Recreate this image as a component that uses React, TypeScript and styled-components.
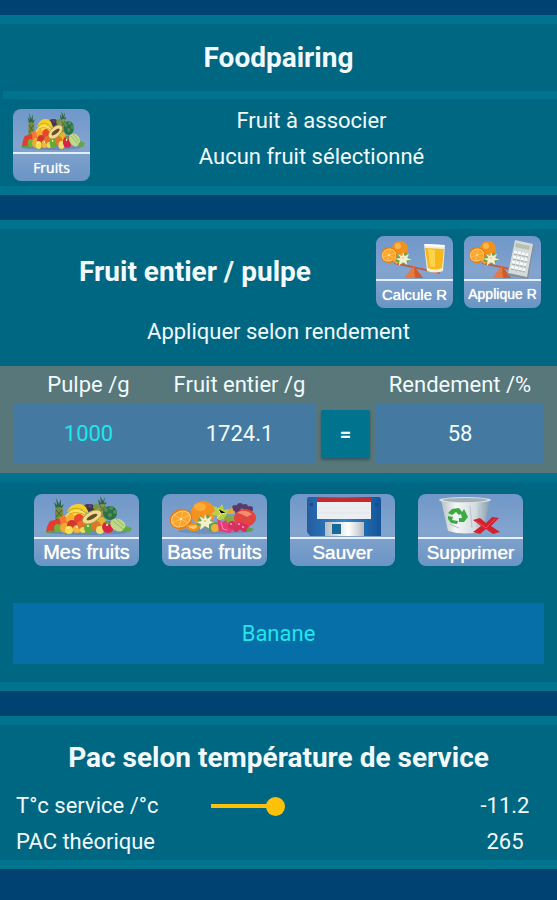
import React, { useState } from 'react';
import styled, { createGlobalStyle } from 'styled-components';

const color = {
  page: '#004271',
  card: '#006783',
  edge: '#00738f',
  band: '#57777a',
  field: '#447aa2',
  name: '#066fa8',
  text: '#f2fbff',
  cyan: '#1ee6ea',
  amber: '#ffc107',
};

const GlobalStyle = createGlobalStyle`
  * { box-sizing: border-box; }
  body {
    margin: 0;
    background: ${color.page};
    color: ${color.text};
    font-family: Roboto, 'Liberation Sans', sans-serif;
    font-size: 22px;
    line-height: 36px;
  }
  button, input { font: inherit; color: inherit; border: 0; margin: 0; padding: 0; }
`;

const Page = styled.main`
  display: flex;
  flex-direction: column;
  gap: 25px;
  padding: 15px 0 31px;
`;

const Card = styled.section`
  background: ${color.card};
  border: solid ${color.edge};
  border-width: 9px 0;
`;

const Title = styled.h2<{ $tall?: boolean }>`
  margin: 0;
  text-align: center;
  font-size: 28px;
  font-weight: 700;
  line-height: ${(p) => (p.$tall ? 67 : 36)}px;
`;

const Pairing = styled.div`
  display: grid;
  grid-template-columns: 77px 1fr;
  align-items: end;
  margin-left: 3px;
  padding: 4px 24px 5px 10px;
  border-top: 8px solid ${color.edge};
`;

const Selection = styled.div`
  padding-bottom: 6px;
`;

const Line = styled.p`
  margin: 0;
  text-align: center;
`;

const YieldHeader = styled.header`
  display: grid;
  grid-template-columns: 1fr auto auto;
  align-items: center;
  column-gap: 11px;
  padding: 7px 16px 6px 25px;
`;

const YieldBand = styled.div`
  display: grid;
  grid-template-columns: 151fr 151fr 61px 168fr;
  grid-template-rows: 37px 61px;
  margin-top: 16px;
  padding: 0 13px 9px;
  background: ${color.band};
`;

const ColumnLabel = styled.label<{ $column: number }>`
  grid-column: ${(p) => p.$column};
  grid-row: 1;
  line-height: 38px;
  text-align: center;
  white-space: nowrap;
`;

const Field = styled.input<{ $editable?: boolean; $name?: boolean; $column?: number }>`
  grid-row: 2;
  grid-column: ${(p) => p.$column ?? 'auto'};
  width: 100%;
  min-width: 0;
  height: 61px;
  border-radius: 0;
  text-align: center;
  background: ${(p) => (p.$name ? color.name : color.field)};
  color: ${(p) => (p.$editable ? color.cyan : color.text)};
`;

const EqualsButton = styled.button`
  grid-row: 2;
  grid-column: 3;
  width: 49px;
  height: 48px;
  place-self: center;
  border-radius: 2px;
  background: ${color.edge};
  box-shadow: 0 2px 3px rgba(0, 40, 60, 0.4);
  font-size: 20px;
  font-weight: 700;
  cursor: pointer;
`;

const Actions = styled.div`
  display: flex;
  justify-content: center;
  gap: 23px;
  padding: 21px 0 37px;
  background: linear-gradient(${color.edge} 6px, ${color.card} 12px);
`;

const NameRow = styled.div`
  display: flex;
  padding: 0 13px 18px;
`;

const Tile = styled.button<{ $wide?: boolean }>`
  display: flex;
  flex-direction: column;
  width: ${(p) => (p.$wide ? 105 : 77)}px;
  height: 72px;
  border-radius: 8px;
  overflow: hidden;
  background: linear-gradient(#6f97c8, #83a4cf 50%, #7fa1cc 60%, #6a95c5);
  color: #fff;
  cursor: pointer;
`;

const Picture = styled.svg`
  display: block;
  width: 100%;
  height: 43px;
`;

const Caption = styled.span<{ $size: number; $open?: boolean }>`
  width: 100%;
  height: 29px;
  border-top: 2px solid #e3f0fd;
  font-family: ${(p) => (p.$open ? "'Open Sans'" : "'Liberation Sans'")}, sans-serif;
  font-size: ${(p) => p.$size}px;
  line-height: 27px;
  white-space: nowrap;
  text-shadow: 0 0 1px #fff;
`;

const ServiceTitle = styled(Title)`
  padding: 15px 0 12px;
`;

const ServiceRow = styled.div`
  display: grid;
  grid-template-columns: 195px 145px 1fr;
  align-items: center;
  height: 36px;
  padding: 0 16px;
`;

const Reading = styled.output`
  grid-column: 3;
  justify-self: end;
  width: 72px;
  text-align: center;
`;

const Slider = styled.input<{ $percent: number }>`
  appearance: none;
  width: 100%;
  height: 20px;
  background: linear-gradient(90deg, ${color.amber} ${(p) => p.$percent}%, transparent ${(p) => p.$percent}%)
    center / 100% 4px no-repeat;
  &::-webkit-slider-thumb {
    appearance: none;
    width: 19px;
    height: 19px;
    border-radius: 50%;
    background: ${color.amber};
  }
`;

const FruitPile = () => (
  <Picture viewBox="0 0 105 43" preserveAspectRatio="none" aria-hidden="true">
    <ellipse cx="53" cy="38" rx="41" ry="3" fill="#5876a0" opacity=".5" />
    <g fill="#2f6847">
      <path d="M22 15 20 8l3 3-1-7 3 6 2-5v7l3-2-3 6z" />
      <path d="m65 12-1-7 3 4-1-7 3 5 2-4-1 6 3-1-4 6z" />
    </g>
    <rect x="21" y="13" width="8" height="17" rx="4" fill="#7b8a39" />
    <path d="m22 16 6 7m0-7-6 7m0 2 6 3" stroke="#3c633b" />
    <rect x="65" y="10" width="7" height="13" rx="3" fill="#8f9144" />
    <path d="M66 12l5 6m0-6-5 6" stroke="#496b3a" />
    <ellipse cx="55" cy="14" rx="7" ry="4" fill="#3e354c" />
    <g fill="#5a4469"><circle cx="51" cy="13" r="2" /><circle cx="56" cy="12" r="2" /></g>
    <circle cx="62" cy="13" r="3" fill="#7b973b" />
    <path d="M33 18Q36 9 46 10q6 0 9 10-6-4-11-4-4 0-11 2z" fill="#f6ce28" />
    <path d="M31 22q7-8 14-6 7 1 9 8-8-5-22 1z" fill="#ffe052" />
    <path d="M34 17q8-5 15-1m-14 4q8-3 16 1" fill="none" stroke="#d0a014" />
    <circle cx="76" cy="19" r="7" fill="#2e7145" />
    <g fill="#4b915a"><circle cx="72" cy="16" r="2" /><circle cx="77" cy="14" r="2" /><circle cx="81" cy="18" r="2" /><circle cx="76" cy="21" r="2" /></g>
    <circle cx="29" cy="27" r="5" fill="#f17933" /><circle cx="37" cy="25" r="5" fill="#f9ad2f" />
    <circle cx="45" cy="25" r="5" fill="#e9462f" /><circle cx="67" cy="28" r="5" fill="#e6b52c" />
    <path d="m16 27 10-2 1 12-15 1q1-7 4-11z" fill="#e53b31" />
    <path d="M12 38 26 37" stroke="#54a143" strokeWidth="2" />
    <circle cx="24" cy="34" r="4" fill="#72af3c" /><circle cx="31" cy="34" r="5" fill="#efa835" />
    <circle cx="38" cy="31" r="5" fill="#cf382e" /><circle cx="35" cy="36" r="4" fill="#f6e04a" />
    <circle cx="43" cy="35" r="4" fill="#f3b53c" /><circle cx="47" cy="31" r="4" fill="#eb6e28" />
    <circle cx="49" cy="36" r="3" fill="#eadd54" /><circle cx="55" cy="34" r="5" fill="#65a83a" />
    <circle cx="62" cy="32" r="5" fill="#d8792b" /><circle cx="66" cy="36" r="4" fill="#efe06b" />
    <ellipse cx="58" cy="23" rx="11" ry="6" fill="#a99d3c" transform="rotate(-28 58 23)" />
    <ellipse cx="58" cy="23" rx="10" ry="5" fill="#f5d78e" transform="rotate(-28 58 23)" />
    <ellipse cx="58" cy="23" rx="6" ry="2" fill="#62502f" transform="rotate(-28 58 23)" />
    <ellipse cx="74" cy="33" rx="6" ry="6" fill="#db2445" />
    <path d="m70 28 4-1 3 2-3 2z" fill="#63a940" />
    <ellipse cx="84" cy="31" rx="8" ry="6" fill="#bfd98a" transform="rotate(25 84 31)" />
    <path d="m79 27 10 8m-7-10 8 7" stroke="#91b968" />
    <path d="m88 37 4-5 6 2-2 4z" fill="#64a841" />
    <g fill="#fff4b9"><circle cx="34" cy="34" r="1" /><circle cx="43" cy="33" r="1" /><circle cx="54" cy="32" r="1" /><circle cx="73" cy="31" r="1" /></g>
  </Picture>
);

const Blossom = () => (
  <g>
    <path d="m-9 4 4-10 3 5 5-6 5 9-5 6z" fill="#6ba450" />
    <g fill="#f4f0cf">
      <path d="m0-7 2 5 5-3-2 5 5 2-6 1 1 5-5-3-5 4 1-6-5-2 6-1-3-5 5 3z" />
    </g>
    <circle r="1" fill="#dcc75c" />
  </g>
);

const OrangeHalf = () => (
  <g>
    <circle r="10" fill="#e87c0d" />
    <ellipse rx="9" ry="8" fill="#ffd08a" />
    <ellipse rx="8" ry="7" fill="#faa52a" />
    <path d="M-8 0H8M-4-6 4 6M4-6-4 6" stroke="#fdbd5b" />
    <circle r="1" fill="#fff0c7" />
  </g>
);

const CitrusMix = () => (
  <Picture viewBox="0 0 105 43" preserveAspectRatio="none" aria-hidden="true">
    <ellipse cx="52" cy="37" rx="36" ry="3" fill="#5876a0" opacity=".4" />
    <circle cx="41" cy="19" r="12" fill="#f5921e" /><ellipse cx="38" cy="13" rx="6" ry="4" fill="#ffab38" />
    <g transform="translate(19 25) rotate(-24) scale(1.15 1)"><OrangeHalf /></g>
    <path d="m23 31 14-2q3 6-3 8-9 1-11-6z" fill="#f2921c" /><path d="m26 32 9-1q0 4-4 4-3 0-5-3z" fill="#ffc75f" />
    <path d="m51 12 6 2 3-4 2 6 6-1-4 6 4 5-8-1-5 4v-7l-6-2 4-3z" fill="#bbd047" />
    <path d="m56 15 3 5 5-1m-9 5 4-4" stroke="#edf08c" />
    <g fill="#5c3967"><circle cx="73" cy="14" r="3" /><circle cx="78" cy="12" r="3" /><circle cx="83" cy="13" r="3" /><circle cx="88" cy="15" r="3" /><circle cx="76" cy="17" r="3" /></g>
    <path d="m65 20 5-7 3 7z" fill="#eba92b" />
    <ellipse cx="83" cy="24" rx="11" ry="9" fill="#e0453f" /><path d="M75 19q7-5 15 1l-5 3q-7-4-10-4z" fill="#f1906d" />
    <ellipse cx="67" cy="25" rx="5" ry="4" fill="#8aa93c" />
    <g transform="translate(43 27)"><Blossom /></g>
    <path d="M47 31q6-6 12 0v6H47z" fill="#5c9f4c" /><circle cx="53" cy="34" r="4" fill="#f4ae3a" />
    <path d="m55 25 6 3 3-2 4 8 4 1-4 4-11-2z" fill="#e63b79" /><path d="m59 28 2 7 4 1" stroke="#ff8caf" fill="none" />
    <g fill="#d92f5e"><circle cx="70" cy="31" r="4" /><circle cx="74" cy="35" r="3" /><circle cx="78" cy="32" r="4" /><circle cx="83" cy="34" r="4" /></g>
    <g fill="#ff9cb2"><circle cx="69" cy="30" r="1" /><circle cx="77" cy="30" r="1" /><circle cx="81" cy="33" r="1" /></g>
    <path d="m86 33 6 2-3 3-5-1z" fill="#61a044" />
  </Picture>
);

const Floppy = () => (
  <Picture viewBox="0 0 105 43" aria-hidden="true">
    <defs><linearGradient id="disk"><stop stopColor="#255ca0" /><stop offset=".5" stopColor="#2e88ca" /><stop offset="1" stopColor="#145398" /></linearGradient>
      <linearGradient id="shutter"><stop stopColor="#b7bdc3" /><stop offset=".6" stopColor="#fff" /><stop offset="1" stopColor="#b5bac1" /></linearGradient></defs>
    <path d="M19 3h70q2 0 2 3v36H20l-3-4V6q0-3 2-3z" fill="url(#disk)" />
    <path d="M27 4h54v21H27z" fill="#eceff2" /><path d="M27 4h54v4H27z" fill="#c22b30" />
    <path d="M28 14h52m-52 5h52" stroke="#dfe3e7" />
    <path d="M35 28h39v14H35z" fill="url(#shutter)" /><path d="M42 30h9v10h-9z" fill="#176a99" />
    <path d="M20 9h3v3h-3zm65 0h3v3h-3z" fill="#164c87" />
  </Picture>
);

const Bin = () => (
  <Picture viewBox="0 0 105 43" aria-hidden="true">
    <defs><linearGradient id="bin"><stop stopColor="#b5bfc4" /><stop offset=".3" stopColor="#f5f7f6" /><stop offset=".7" stopColor="#d3dce0" /><stop offset="1" stopColor="#839cae" /></linearGradient></defs>
    <path d="m23 6 7 31q18 5 35 0l7-31z" fill="url(#bin)" />
    <ellipse cx="47" cy="6" rx="26" ry="3" fill="#d7dfe2" /><ellipse cx="47" cy="6" rx="22" ry="2" fill="#a3afb6" />
    <path d="m52 12 2 22m8-21-3 20M31 30l10 4" stroke="#b7c3c9" fill="none" />
    <path d="m34 15 7-1 4 5-4 2-3-3-4 3-4-2zm12 0 4 8-4 5h-5v-4h3l-1-4zm-16 7 5 1-1 3 6 1-1 3-6-1-3-4z" fill="#3caa42" />
    <path d="m55 26 7-2 6 5 6-6 7 1-8 8 9 6-7 2-7-5-6 5-7-2 8-6z" fill="#d3222e" />
    <path d="m58 27 10 7 9-9" fill="none" stroke="#ea4f57" />
  </Picture>
);

const ScaleParts = () => (
  <>
    <path d="m18 26 46 10v2L18 28z" fill="#bc6047" />
    <path d="m38 30 9 12H28z" fill="#e9793e" /><path d="m38 30 1 12h8z" fill="#cf5b32" />
    <circle cx="24" cy="13" r="8" fill="#f1911f" /><circle cx="22" cy="10" r="3" fill="#ffb647" />
    <g transform="translate(13 19) rotate(-20) scale(.8)"><OrangeHalf /></g>
    <path d="m16 23 9-2 1 5-6 2z" fill="#f8a72f" />
    <g transform="translate(27 22) scale(.85)"><Blossom /></g>
  </>
);

const JuiceScale = () => (
  <Picture viewBox="0 0 77 43" aria-hidden="true">
    <ScaleParts />
    <path d="m48 8 21 1-2 26q-8 3-16 0z" fill="#edf0df" />
    <path d="m49 12 19 1-2 19q-7 3-14 0z" fill="#f8b71a" /><path d="m52 13 7 1v17h-5z" fill="#ffd24c" />
    <path d="m49 9 19 1" stroke="#fff" strokeWidth="2" />
  </Picture>
);

const CalculatorScale = () => (
  <Picture viewBox="0 0 77 43" aria-hidden="true">
    <ScaleParts />
    <path d="m51 5 19 4-6 34-21-4z" fill="#868f94" /><path d="m51 4 18 4-6 33-19-4z" fill="#d4dadb" />
    <path d="m52 7 14 3-1 4-14-3z" fill="#b5c3ad" />
    <path d="m50 16 14 3m-15 2 14 3m-15 2 14 3m-15 2 14 3" stroke="#f9faf9" strokeWidth="3" strokeDasharray="3 1" />
    <path d="m50 18 14 3m-15 2 14 3m-15 2 14 3m-15 2 14 3" stroke="#9ba4a8" strokeDasharray="3 1" />
  </Picture>
);

type TileProps = { caption: string; size: number; wide?: boolean; open?: boolean; children: React.ReactNode };

const PictureTile = ({ caption, size, wide, open, children }: TileProps) => (
  <Tile type="button" $wide={wide}>
    {children}
    <Caption $size={size} $open={open}>{caption}</Caption>
  </Tile>
);

const MIN_TEMP = -20;
const MAX_TEMP = 0;

export default function App() {
  const [pulp, setPulp] = useState('1000');
  const [name, setName] = useState('Banane');
  const [temp, setTemp] = useState(-11.2);
  const percent = ((temp - MIN_TEMP) / (MAX_TEMP - MIN_TEMP)) * 100;

  return (
    <>
      <GlobalStyle />
      <Page>
        <Card>
          <Title $tall>Foodpairing</Title>
          <Pairing>
            <PictureTile caption="Fruits" size={14} open><FruitPile /></PictureTile>
            <Selection>
              <Line>Fruit à associer</Line>
              <Line>Aucun fruit sélectionné</Line>
            </Selection>
          </Pairing>
        </Card>

        <Card>
          <YieldHeader>
            <Title>Fruit entier / pulpe</Title>
            <PictureTile caption="Calcule R" size={15}><JuiceScale /></PictureTile>
            <PictureTile caption="Applique R" size={14}><CalculatorScale /></PictureTile>
          </YieldHeader>
          <Line>Appliquer selon rendement</Line>
          <YieldBand>
            <ColumnLabel htmlFor="pulp" $column={1}>Pulpe /g</ColumnLabel>
            <ColumnLabel htmlFor="whole" $column={2}>Fruit entier /g</ColumnLabel>
            <ColumnLabel htmlFor="yield" $column={4}>Rendement /%</ColumnLabel>
            <Field id="pulp" inputMode="decimal" $column={1} $editable value={pulp} onChange={(e) => setPulp(e.target.value)} />
            <Field id="whole" $column={2} readOnly value="1724.1" />
            <EqualsButton type="button">=</EqualsButton>
            <Field id="yield" $column={4} readOnly value="58" />
          </YieldBand>
          <Actions>
            <PictureTile caption="Mes fruits" size={20} wide><FruitPile /></PictureTile>
            <PictureTile caption="Base fruits" size={20} wide><CitrusMix /></PictureTile>
            <PictureTile caption="Sauver" size={19} wide><Floppy /></PictureTile>
            <PictureTile caption="Supprimer" size={19} wide><Bin /></PictureTile>
          </Actions>
          <NameRow>
            <Field aria-label="Fruit" $name $editable value={name} onChange={(e) => setName(e.target.value)} />
          </NameRow>
        </Card>

        <Card>
          <ServiceTitle>Pac selon température de service</ServiceTitle>
          <ServiceRow>
            <label htmlFor="temp">T°c service /°c</label>
            <Slider
              id="temp"
              type="range"
              min={MIN_TEMP}
              max={MAX_TEMP}
              step={0.1}
              value={temp}
              $percent={percent}
              onChange={(e) => setTemp(Number(e.target.value))}
            />
            <Reading htmlFor="temp">{temp.toFixed(1)}</Reading>
          </ServiceRow>
          <ServiceRow>
            <span>PAC théorique</span>
            <Reading>265</Reading>
          </ServiceRow>
        </Card>
      </Page>
    </>
  );
}
